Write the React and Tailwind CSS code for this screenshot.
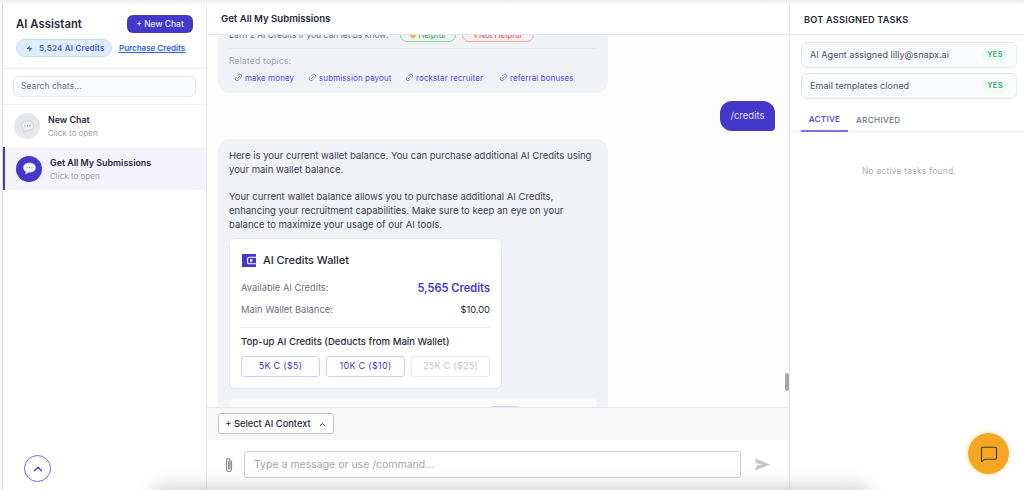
import React from "react";
import { Link2, Zap, ChevronUp, MessageSquare } from "lucide-react";

function Balloon({ fill = "#f3f3f3" }) {
  return (
    <svg width="15" height="15" viewBox="0 0 16 16">
      <path d="M8 2C4.100 2 1.500 4.200 1.500 7.100c0 1.900 1.100 3.500 2.900 4.400-.1.900-.6 1.800-1.200 2.400 1.500-.1 2.800-.8 3.700-1.800h1.100c3.900 0 6.500-2.100 6.500-5S11.900 2 8 2z" fill={fill} stroke="#bdbdbd" strokeWidth=".6" />
      <circle cx="5.300" cy="7.200" r=".7" fill="#9a9a9a" />
      <circle cx="8" cy="7.200" r=".7" fill="#9a9a9a" />
      <circle cx="10.700" cy="7.200" r=".7" fill="#9a9a9a" />
    </svg>
  );
}

function ChatItem({ title, active }) {
  return (
    <div className={active ? "flex h-[43px] items-center gap-2 border-l-2 border-[#4338ca] bg-[#f5f3ff] pl-[11px]" : "flex h-[42px] items-center gap-2 pl-[11px]"}>
      <div className={active ? "flex size-[26px] items-center justify-center rounded-full bg-[#4338ca]" : "flex size-[26px] items-center justify-center rounded-full bg-[#e5e7eb]"}>
        <Balloon fill={active ? "#f5f5f5" : "#f0f0f0"} />
      </div>
      <div className={active ? "flex flex-col gap-[3px] pt-[2px]" : "flex flex-col gap-[3px]"}>
        <div className="text-[8.900px] leading-[11px] font-semibold text-[#1f2937]">{title}</div>
        <div className="text-[8px] leading-[11px] text-[#9ca3af]">Click to open</div>
      </div>
    </div>
  );
}

function Topic({ label, width }) {
  return (
    <span style={{ width }} className="flex h-[13px] items-center gap-[2px] rounded-full bg-[#eef2ff] pl-[5px] text-[8px] tracking-[.1px] whitespace-nowrap text-[#4f46e5]">
      <Link2 size={9} className="-rotate-45 text-[#6b7280]" />
      {label}
    </span>
  );
}

function Sidebar() {
  return (
    <aside className="flex w-[204px] shrink-0 flex-col border-r border-[#e5e7eb] bg-white">
      <div className="flex h-[65px] shrink-0 flex-col border-b border-[#eceef3] px-[13px] pt-[11px]">
        <div className="flex h-[18px] items-center justify-between">
          <h1 className="text-[11.200px] font-semibold tracking-[.1px] text-[#1f2937]">AI Assistant</h1>
          <button className="h-[18px] w-[66px] rounded-md bg-[#4338ca] text-[8.500px] font-medium text-[#e8e6fb]">+ New Chat</button>
        </div>
        <div className="mt-[6px] flex items-center gap-[7px]">
          <span className="flex h-[18px] w-[96px] items-center gap-[6px] rounded-full border border-[#bfdbfe] bg-[#e0edff] pl-[9px] text-[8px] font-semibold tracking-[.2px] text-[#3b5bdb]">
            <Zap size={7} fill="#2563eb" strokeWidth={0} />
            5,524 AI Credits
          </span>
          <span className="text-[8px] font-semibold text-[#2563eb] underline">Purchase Credits</span>
        </div>
      </div>
      <div className="flex h-[36px] shrink-0 items-center border-b border-[#f1f2f5] px-[10px]">
        <div className="flex h-[21px] w-[183px] items-center rounded-md border border-[#e5e7eb] bg-[#f9fafb] px-[7px] text-[8.600px] text-[#6b7280]">Search chats...</div>
      </div>
      <ChatItem title="New Chat" />
      <ChatItem title="Get All My Submissions" active />
      <div className="flex-1" />
      <div className="px-[21px] pb-[8px]">
        <div className="flex size-[27px] items-center justify-center rounded-full border border-[#6d64f0]">
          <ChevronUp size={14} strokeWidth={2.500} className="text-[#4f46e5]" />
        </div>
      </div>
    </aside>
  );
}

function Wallet() {
  return (
    <div className="mt-[7px] w-[273px] rounded-md border border-[#e5e7eb] bg-white px-[11px] pt-[13px] pb-[11px]">
      <div className="flex items-center gap-[7px]">
        <svg width="14" height="13" viewBox="0 0 14 13" className="ml-[1px] shrink-0">
          <rect width="14" height="13" fill="#4338ca" />
          <path d="M14 3.200H7.200a1.600 1.600 0 0 0-1.600 1.600v3.400a1.600 1.600 0 0 0 1.600 1.600H14" fill="none" stroke="#fff" strokeWidth="1.100" />
          <rect x="8" y="5.300" width="2.400" height="2.400" fill="#fff" />
        </svg>
        <span className="text-[10.900px] font-medium text-[#1f2937]">AI Credits Wallet</span>
      </div>
      <div className="mt-[11px] flex h-[18px] items-center justify-between">
        <span className="-mt-[1px] text-[9.300px] text-[#6b7280]">Available AI Credits:</span>
        <span className="text-[11.100px] font-semibold text-[#4338ca]">5,565 Credits</span>
      </div>
      <div className="mt-[3px] flex h-[18px] items-center justify-between">
        <span className="text-[9.400px] text-[#6b7280]">Main Wallet Balance:</span>
        <span className="text-[9.300px] text-[#1f2937]">$10.00</span>
      </div>
      <div className="mt-[8px] border-t border-[#e5e7eb]" />
      <div className="mt-[8px] text-[9.600px] leading-[12px] font-medium text-[#1f2937]">Top-up AI Credits (Deducts from Main Wallet)</div>
      <div className="mt-[8px] grid grid-cols-3 gap-[6px]">
        <button className="h-[21px] rounded-[3px] border border-[#c7d2fe] text-[9px] tracking-[.3px] text-[#4338ca]">5K C ($5)</button>
        <button className="h-[21px] rounded-[3px] border border-[#c7d2fe] text-[9px] tracking-[.3px] text-[#4338ca]">10K C ($10)</button>
        <button className="h-[21px] rounded-[3px] border border-[#e5e7eb] text-[9px] tracking-[.3px] text-[#c4c7cd]">25K C ($25)</button>
      </div>
    </div>
  );
}

function Messages() {
  return (
    <div className="relative min-h-0 flex-1 overflow-hidden bg-[#fdfdfd]">
      <div className="-mt-[22px] flex flex-col pr-[14px] pl-[11px]">
        <div className="h-[80px] w-[390px] rounded-b-xl bg-[#f1f2f5] px-[11px] pt-[15px]">
          <div className="flex items-center">
            <span className="text-[8.500px] leading-[12px] whitespace-nowrap text-[#6b7280]">Earn 2 AI Credits if you can let us know:</span>
            <span className="ml-[11px] flex h-[14px] w-[56px] items-center justify-center gap-[2px] rounded-full border border-[#86d993] text-[8px] text-[#16a34a]">
              <span className="size-[6px] rounded-sm bg-[#f0b354]" />Helpful
            </span>
            <span className="ml-[6px] flex h-[14px] w-[72px] items-center justify-center gap-[2px] rounded-full border border-[#f8a29a] text-[8px] text-[#ef4444]">
              <span className="h-[6px] w-[3px] rounded-sm bg-[#f0b354]" />Not Helpful
            </span>
          </div>
          <div className="mt-[6px] border-t border-[#e5e7eb]" />
          <div className="mt-[6px] text-[8.500px] leading-[12px] tracking-[.2px] text-[#9ca3af]">Related topics:</div>
          <div className="mt-[4px] flex gap-[6px]">
            <Topic label="make money" width={68} />
            <Topic label="submission payout" width={91} />
            <Topic label="rockstar recruiter" width={88} />
            <Topic label="referral bonuses" width={83} />
          </div>
        </div>
        <div className="mt-[8px] w-[55px] self-end rounded-t-xl rounded-bl-xl rounded-br-sm bg-[#4338ca] py-[8px] text-center text-[9.500px] leading-[14px] text-[#e0defa]">/credits</div>
        <div className="mt-[8px] h-[400px] w-[390px] rounded-xl bg-[#f1f2f5] px-[11px] pt-[10px]">
          <p className="text-[9.500px] leading-[13.700px] text-[#374151]">Here is your current wallet balance. You can purchase additional AI Credits using your main wallet balance.</p>
          <p className="mt-[13.700px] text-[9.500px] leading-[13.700px] text-[#374151]">Your current wallet balance allows you to purchase additional AI Credits, enhancing your recruitment capabilities. Make sure to keep an eye on your balance to maximize your usage of our AI tools.</p>
          <Wallet />
          <div className="mt-[9px] flex h-[60px] justify-end rounded-md bg-[#f9fafb] pt-[8px] pr-[75px]">
            <div className="h-[20px] w-[34px] rounded-md border border-[#c7d2fe]" />
          </div>
        </div>
      </div>
      <div className="absolute top-[338px] right-0 h-[18px] w-[4px] rounded-sm bg-[#a8a8a8]" />
    </div>
  );
}

function Chat() {
  return (
    <main className="flex min-w-0 flex-1 flex-col border-r border-[#e5e7eb]">
      <header className="flex h-[31px] shrink-0 items-center border-b border-[#e5e7f0] bg-white pt-[1px] pl-[14px]">
        <h2 className="text-[9.600px] font-semibold text-[#1f2937]">Get All My Submissions</h2>
      </header>
      <Messages />
      <div className="flex h-[33px] shrink-0 items-start border-t border-[#e5e7eb] bg-[#f8f8f8] pt-[5px] pl-[11px]">
        <button className="flex h-[21px] w-[116px] items-center justify-center gap-[7px] rounded-[3px] border border-[#c4c7cd] bg-white pt-[1px] text-[9.300px] font-medium text-[#1f2937]">
          + Select AI Context
          <ChevronUp size={9} strokeWidth={2.500} />
        </button>
      </div>
      <div className="flex h-[50px] shrink-0 items-start gap-[8px] bg-white pt-[11px] pl-[14px]">
        <div className="flex h-[27px] w-[15px] items-center justify-center">
          <svg width="10" height="16" viewBox="0 0 10 16" fill="none" stroke="#8b8f96" strokeWidth="1.200" strokeLinecap="round">
            <path d="M7.500 4v8a2.500 2.500 0 0 1-5 0V3.500a1.800 1.800 0 0 1 3.600 0V11a.8.8 0 0 1-1.600 0V4" />
          </svg>
        </div>
        <div className="flex h-[27px] w-[497px] items-center rounded-[3px] border border-[#d1d5db] px-[9px] text-[10.500px] text-[#a3a7ae]">Type a message or use /command...</div>
        <div className="ml-[5px] flex h-[27px] w-[16px] items-center justify-center">
          <svg width="15" height="13" viewBox="0 0 16 13"><path d="M0 0l16 6.500L0 13l1.500-5.200L8 6.500 1.500 5.200z" fill="#c2c4c8" /></svg>
        </div>
      </div>
    </main>
  );
}

function Task({ label }) {
  return (
    <div className="flex h-[26px] items-center justify-between rounded-md border border-[#e5e7eb] bg-[#f9fafb] pr-[8px] pl-[8px]">
      <span className="text-[9.100px] text-[#4b5563]">{label}</span>
      <span className="flex h-[13px] w-[26px] items-center justify-center rounded-full bg-[#edfbf3] text-[7.500px] font-semibold tracking-[.3px] text-[#34a874]">YES</span>
    </div>
  );
}

function RightPanel() {
  return (
    <aside className="flex w-[234px] shrink-0 flex-col bg-white">
      <div className="flex h-[31px] shrink-0 items-center border-b border-[#e5e7f0] pt-[1px] pl-[14px]">
        <h2 className="text-[9.200px] font-semibold tracking-[.2px] text-[#1f2937]">BOT ASSIGNED TASKS</h2>
      </div>
      <div className="flex flex-col gap-[5px] pt-[7px] pr-[7px] pl-[11px]">
        <Task label="AI Agent assigned lilly@snapx.ai" />
        <Task label="Email templates cloned" />
      </div>
      <div className="mt-[9px] flex h-[24px] shrink-0 border-b border-[#f0f1f4] pl-[11px]">
        <div className="flex h-[24px] w-[47px] items-center justify-center border-b-2 border-[#7c6fe8] pt-[1px] text-[8.200px] font-semibold tracking-[.2px] text-[#5b50e0]">ACTIVE</div>
        <div className="flex h-[24px] items-center pt-[1px] pl-[8px] text-[8.200px] font-medium tracking-[.3px] text-[#6b7280]">ARCHIVED</div>
      </div>
      <div className="mt-[33px] pl-[4px] text-center text-[8.500px] leading-[12px] tracking-[.2px] text-[#a8adb6]">No active tasks found.</div>
    </aside>
  );
}

export default function App() {
  return (
    <div className="relative h-[490px] w-[1024px] overflow-hidden bg-white font-['Inter',sans-serif]">
      <div className="h-[4px] bg-gradient-to-b from-[#ececec] to-[#f8f8f8]" />
      <div className="flex h-[486px]">
        <div className="w-[3px] shrink-0 border-r border-[#dcdcdc] bg-[#fafafa]" />
        <Sidebar />
        <Chat />
        <RightPanel />
      </div>
      <div className="pointer-events-none absolute -bottom-[20px] left-[150px] h-[26px] w-[720px] rounded-full bg-[#000]/15 blur-[8px]" />
      <button className="absolute top-[433px] left-[968px] flex size-[41px] items-center justify-center rounded-full bg-[#f5a623] shadow-[0_0_6px_rgba(245,166,35,.35)]">
        <MessageSquare size={18} strokeWidth={1.500} className="text-[#3f3a33]" />
      </button>
    </div>
  );
}
